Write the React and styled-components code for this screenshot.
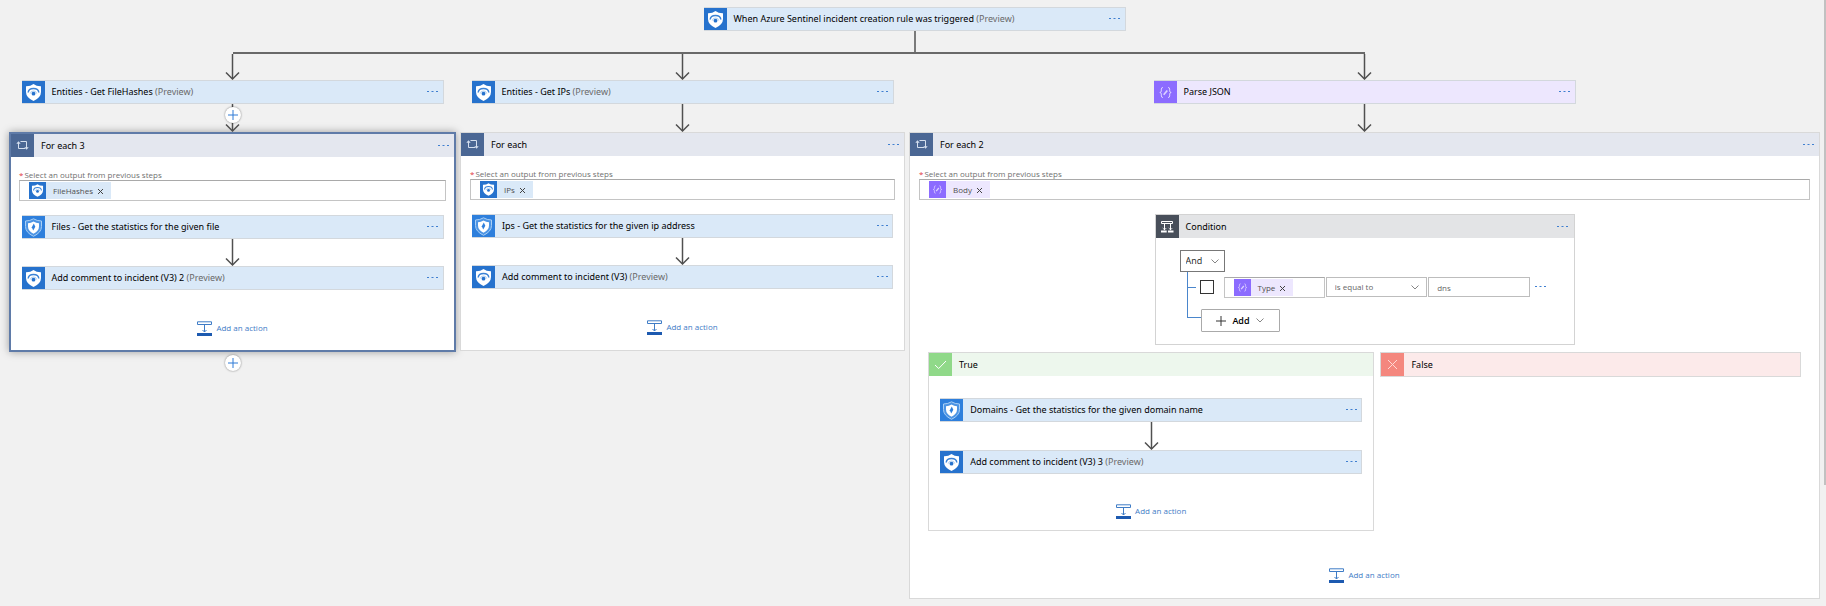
import React from "react";
import styled, { createGlobalStyle, css } from "styled-components";

const GlobalStyle = createGlobalStyle`
  * { box-sizing: border-box; }
  body {
    margin: 0;
    background: #f1f1f1;
    color: #000;
    font-family: "Open Sans", "Noto Sans", sans-serif;
    font-size: 9px;
    line-height: 12px;
  }
  button, input, select { font: inherit; color: inherit; }
  button { padding: 0; border: 0; background: none; cursor: pointer; }
`;

const tones = {
  blue: { icon: "#2672cd", fill: "#dae9f8" },
  sky: { icon: "#2e7fdc", fill: "#dae9f8" },
  purple: { icon: "#8c6cff", fill: "#ede7fe" },
  loop: { icon: "#4b6794", fill: "#e4e7ef" },
  slate: { icon: "#484f5a", fill: "#e3e4e6" },
  green: { icon: "#90d989", fill: "#edf7ed" },
  red: { icon: "#f4877e", fill: "#fceaea" },
};

const Page = styled.div`
  display: flex;
  align-items: flex-start;
  min-height: 100vh;
`;

const Designer = styled.main`
  flex: 1;
  min-width: 0;
  padding: 7px 2px 7px 7px;
`;

const ScrollThumb = styled.div`
  width: 2px;
  height: 80vh;
  background: #c1c1c1;
`;

const Columns = styled.div`
  display: grid;
  grid-template-columns: 451fr 449fr 915fr;
  align-items: start;
`;

const Column = styled.section`
  display: flex;
  flex-direction: column;
  align-items: center;
  min-width: 0;
`;

const TriggerRow = styled.div`
  display: flex;
  flex-direction: column;
  align-items: center;
`;

const Stem = styled.div`
  width: 2px;
  height: 21px;
  background: #7a7a7a;
`;

const BranchLine = styled.div`
  align-self: stretch;
  height: 2px;
  background: #696969;
  margin-left: ${(p) => (p.$first ? "50%" : "0")};
  margin-right: ${(p) => (p.$last ? "50%" : "0")};
`;

const CardBox = styled.article`
  display: flex;
  align-items: center;
  width: 100%;
  max-width: 422px;
  height: 24px;
  padding: 1px 0;
  box-shadow: inset 0 0 0 1px #d3d8dd;
  background: ${(p) => tones[p.$tone].fill};
`;

const HeaderBar = styled.header`
  display: flex;
  align-items: center;
  height: 23px;
  background: ${(p) => tones[p.$tone].fill};
`;

const IconTile = styled.span`
  display: flex;
  flex: none;
  align-items: center;
  justify-content: center;
  width: 23px;
  height: 100%;
  background: ${(p) => tones[p.$tone].icon};
`;

const Title = styled.span`
  flex: 1;
  min-width: 0;
  padding-left: 7px;
  font-family: "Noto Sans", sans-serif;
  white-space: nowrap;
`;

const Muted = styled.span`
  color: #6a6a6a;
`;

const MenuButton = styled.button`
  display: flex;
  flex: none;
  align-items: center;
  justify-content: center;
  width: 22px;
  height: 20px;
`;

const ContainerBody = styled.div`
  padding: 13px 9px 15px;
`;

const Container = styled.section`
  width: calc(100% - 4px);
  background: #fff;
  border: 1px solid #d9d9d9;
  ${(p) =>
    p.$selected &&
    css`
      border: 2px solid #5f7ba8;
      box-shadow: 0 0 8px rgba(0, 0, 0, 0.35);
      ${ContainerBody} { padding: 13px 8px 14px; }
    `}
`;

const Steps = styled.div`
  display: flex;
  flex-direction: column;
  align-items: center;
  padding: ${(p) => (p.$wide ? "14px 9px 0" : "14px 2px 0")};
`;

const FieldLabel = styled.label`
  display: block;
  color: #707070;
  font-size: 8px;
  line-height: 10px;
`;

const Required = styled.span`
  color: #e0343c;
  margin-right: 1px;
`;

const TokenField = styled.div`
  display: flex;
  align-items: center;
  width: 100%;
  height: 21px;
  padding-left: 9px;
  border: 1px solid #c4c4c4;
  border-top-color: #a9a9a9;
  background: #fff;
`;

const TokenInput = styled.input`
  flex: 1;
  min-width: 0;
  height: 100%;
  padding: 0;
  border: 0;
  outline: 0;
  background: none;
`;

const TokenBox = styled.span`
  display: flex;
  flex: none;
  align-items: center;
  height: 17px;
  padding-right: 8px;
  color: #505050;
  font-size: 8px;
  background: ${(p) => tones[p.$tone].fill};
`;

const TokenTile = styled(IconTile)`
  width: 17px;
  margin-right: 7px;
`;

const RemoveButton = styled.button`
  display: flex;
  margin-left: 5px;
  padding-top: 2px;
`;

const AddLink = styled.button`
  display: flex;
  align-items: center;
  gap: 4px;
  height: 16px;
  margin: ${(p) => p.$space || 30}px auto 0;
  color: #3f7cc6;
  font-size: 8px;
`;

const PlusButton = styled.button`
  display: flex;
  align-items: center;
  justify-content: center;
  width: 16px;
  height: 16px;
  border-radius: 50%;
  background: #fff;
  box-shadow: 0 0 2px rgba(0, 0, 0, 0.5);
`;

const ArrowSlot = styled.div`
  position: relative;
  display: flex;
  justify-content: center;
`;

const InsertButton = styled(PlusButton)`
  position: absolute;
  top: 3px;
`;

const TrailingPlus = styled(PlusButton)`
  margin-top: 3px;
`;

const ConditionBox = styled.section`
  width: 100%;
  max-width: 420px;
  padding-bottom: 12px;
  border: 1px solid #d3d3d3;
  background: #fff;
`;

const ConditionBody = styled.div`
  padding: 12px 24px 0;
`;

const SelectShell = styled.span`
  position: relative;
  display: flex;
  align-items: center;
  width: ${(p) => (p.$fill ? "auto" : "45px")};
`;

const SelectBox = styled.select`
  appearance: none;
  width: 100%;
  height: ${(p) => (p.$small ? 20 : 22)}px;
  padding: ${(p) => (p.$small ? "0 8px" : "0 5px")};
  border: 1px solid ${(p) => (p.$small ? "#bdbdbd" : "#777")};
  border-radius: 0;
  background: #fff;
  color: ${(p) => (p.$small ? "#666" : "#222")};
  font-size: ${(p) => (p.$small ? 8 : 9)}px;
`;

const SelectChevron = styled.span`
  position: absolute;
  right: ${(p) => (p.$small ? 8 : 6)}px;
  display: flex;
  pointer-events: none;
`;

const RuleTree = styled.div`
  margin-left: 7px;
  border-left: 1px solid #4a86cc;
  height: 46px;
  margin-bottom: 14px;
`;

const RuleRow = styled.div`
  display: flex;
  align-items: flex-start;
  padding-top: 5px;
`;

const Twig = styled.span`
  flex: none;
  width: ${(p) => p.$width}px;
  height: 1px;
  margin-top: ${(p) => p.$top || 0}px;
  background: #4a86cc;
`;

const Check = styled.input`
  appearance: none;
  flex: none;
  width: 14px;
  height: 14px;
  margin: 3px 10px 0 4px;
  border: 1px solid #333;
  background: #fff;
`;

const Operands = styled.div`
  display: grid;
  grid-template-columns: repeat(3, minmax(0, 1fr));
  flex: none;
  align-items: start;
  gap: 1px;
  width: 306px;
`;

const ValueInput = styled.input`
  min-width: 0;
  height: 20px;
  padding: 0 8px;
  border: 1px solid #bdbdbd;
  color: #666;
  font-size: 8px;
`;

const AddRow = styled.div`
  display: flex;
  align-items: flex-start;
  padding-top: 11px;
`;

const AddButton = styled.button`
  display: flex;
  align-items: center;
  justify-content: center;
  gap: 6px;
  width: 79px;
  height: 23px;
  border: 1px solid #aaa;
  border-radius: 1px;
  background: #fff;
  font-weight: 600;
`;

const Branches = styled.div`
  display: flex;
  align-items: flex-start;
  gap: 6px;
  margin: 7px 9px 0;
`;

const TrueBranch = styled.section`
  flex: 447;
  min-width: 0;
  border: 1px solid #d9d9d9;
`;

const FalseBranch = styled.section`
  flex: 421;
  min-width: 0;
  border: 1px solid #d9d9d9;
`;

const TrueBody = styled.div`
  display: flex;
  flex-direction: column;
  align-items: center;
  padding: 22px 11px 11px;
`;

function SentinelIcon({ size = 23 }) {
  return (
    <svg width={size} height={size} viewBox="0 0 23 23" aria-hidden="true">
      <path d="M11.5 3 Q14.5 5.3 19 5.2 V11 Q19 16.5 11.5 20 Q4 16.5 4 11 V5.2 Q8.500 5.300 11.500 3Z" fill="#fff" />
      <path d="M6.200 11.500 Q6.500 7.500 11.500 7.500 Q16.500 7.500 16.800 11.500" fill="none" stroke="#3a82d6" strokeWidth="1.500" />
      <path d="M8.300 12.500 Q8.800 10 11.500 10 Q14.200 10 14.700 12.500" fill="none" stroke="#a9cbf0" strokeWidth="1" />
      <circle cx="11.500" cy="12.700" r="1.900" fill="#2672cd" />
    </svg>
  );
}

function DefenderIcon() {
  return (
    <svg width="23" height="23" viewBox="0 0 23 23" aria-hidden="true">
      <path d="M11.500 2.800 Q15 5 19.500 5 V10.500 Q19.500 16.500 11.500 20.300 Q3.500 16.500 3.500 10.500 V5 Q8 5 11.500 2.800Z" fill="#4c94e4" stroke="#a9cff5" />
      <path d="M11.500 5.500 Q14 7 17 7.200 V10.500 Q17 15 11.500 17.800 Q6 15 6 10.500 V7.200 Q9 7 11.500 5.500Z" fill="#fff" />
      <path d="M11.800 7.500 L9.800 11.200 L11.200 14.500 L13.300 10.800Z" fill="#2e7fdc" />
    </svg>
  );
}

function JsonIcon({ size = 23 }) {
  return (
    <svg width={size} height={size} viewBox="0 0 23 23" fill="none" stroke="#ddd2ff" aria-hidden="true">
      <path d="M9 6.500 Q7.300 6.500 7.300 8 V10 Q7.300 11.500 5.800 11.500 Q7.300 11.500 7.300 13 V15 Q7.300 16.500 9 16.500" />
      <path d="M14 6.500 Q15.700 6.500 15.700 8 V10 Q15.700 11.500 17.200 11.500 Q15.700 11.500 15.700 13 V15 Q15.700 16.500 14 16.500" />
      <path d="M9.700 13.700 L13.300 9.500" strokeWidth="1.700" />
    </svg>
  );
}

function LoopIcon() {
  return (
    <svg width="23" height="23" viewBox="0 0 23 23" fill="none" stroke="#d5dfee" aria-hidden="true">
      <path d="M7.500 9 V14.500 H14" />
      <path d="M9.500 7.500 H15.500 V14" />
      <path d="M5.300 9.800 L7.500 7.300 L9.700 9.800Z M13.300 13.200 L15.500 15.700 L17.700 13.200Z" fill="#d5dfee" stroke="none" />
    </svg>
  );
}

function ConditionIcon() {
  return (
    <svg width="23" height="23" viewBox="0 0 23 23" fill="none" stroke="#fff" aria-hidden="true">
      <path d="M5.500 6.500 H16.500 V8.500 H5.500Z M8.500 8.500 V15 M14.500 8.500 V15" />
      <path d="M6.700 13 L8.500 14.800 L10.300 13 M12.700 13 L14.500 14.800 L16.300 13" strokeWidth=".8" />
      <path d="M5 16.500 H10.700 M12 16.500 H17.500" strokeWidth="2" />
    </svg>
  );
}

function TickIcon() {
  return (
    <svg width="23" height="23" viewBox="0 0 23 23" fill="none" stroke="#fff" aria-hidden="true">
      <path d="M6 12 L9.700 15.500 L17 8" />
    </svg>
  );
}

function CrossIcon() {
  return (
    <svg width="23" height="23" viewBox="0 0 23 23" fill="none" stroke="#ffd9d5" aria-hidden="true">
      <path d="M7 7 L16 16 M16 7 L7 16" />
    </svg>
  );
}

function Arrow({ height = 28 }) {
  return (
    <svg width="15" height={height} viewBox={`0 0 15 ${height}`} fill="none" stroke="#505050" aria-hidden="true">
      <path d={`M7.500 0 V${height - 1}`} strokeWidth="1.500" />
      <path d={`M1 ${height - 7.5} L7.500 ${height - 1} L14 ${height - 7.5}`} strokeWidth="1.500" />
    </svg>
  );
}

function Plus({ size = 10, color = "#2f7bd6" }) {
  return (
    <svg width={size} height={size} viewBox="0 0 10 10" stroke={color} aria-hidden="true">
      <path d="M5 0 V10 M0 5 H10" />
    </svg>
  );
}

function Chevron() {
  return (
    <svg width="8" height="5" viewBox="0 0 8 5" fill="none" stroke="#777" strokeWidth=".9" aria-hidden="true">
      <path d="M.5 .5 L4 4 L7.500 .5" />
    </svg>
  );
}

function Menu() {
  return (
    <MenuButton type="button" aria-label="More commands">
      <svg width="11" height="2" viewBox="0 0 11 2" fill="#3f7fd0" aria-hidden="true">
        <path d="M0 0 H2 V1 H0Z M4.500 0 H6.500 V1 H4.500Z M9 0 H11 V1 H9Z" />
      </svg>
    </MenuButton>
  );
}

const glyphs = {
  sentinel: ["blue", SentinelIcon],
  defender: ["sky", DefenderIcon],
  json: ["purple", JsonIcon],
};

function Card({ kind = "sentinel", title, preview }) {
  const [tone, Glyph] = glyphs[kind];
  return (
    <CardBox $tone={tone}>
      <IconTile $tone={tone}><Glyph /></IconTile>
      <Title>{title}{preview && <Muted> (Preview)</Muted>}</Title>
      <Menu />
    </CardBox>
  );
}

function Header({ tone, icon, title, menu }) {
  return (
    <HeaderBar $tone={tone}>
      <IconTile $tone={tone}>{icon}</IconTile>
      <Title>{title}</Title>
      {menu && <Menu />}
    </HeaderBar>
  );
}

function Token({ kind = "sentinel", children }) {
  const [tone, Glyph] = glyphs[kind];
  return (
    <TokenBox $tone={tone}>
      <TokenTile $tone={tone}><Glyph size={17} /></TokenTile>
      {children}
      <RemoveButton type="button" aria-label={`Remove ${children}`}>
        <svg width="5" height="5" viewBox="0 0 5 5" stroke="#444" aria-hidden="true">
          <path d="M0 0 L5 5 M5 0 L0 5" />
        </svg>
      </RemoveButton>
    </TokenBox>
  );
}

function OutputField({ id, kind, token }) {
  return (
    <>
      <FieldLabel htmlFor={id}><Required>*</Required>Select an output from previous steps</FieldLabel>
      <TokenField>
        <Token kind={kind}>{token}</Token>
        <TokenInput id={id} />
      </TokenField>
    </>
  );
}

function AddAction({ space }) {
  return (
    <AddLink type="button" $space={space}>
      <svg width="15" height="15" viewBox="0 0 15 15" fill="none" stroke="#3f7cc6" aria-hidden="true">
        <path d="M.5 .8 H14.500 V3.500 H.5Z M7.500 3.500 V11 M5.500 9 L7.500 11 L9.500 9" />
        <path d="M0 13.500 H15" stroke="#1d5ab0" strokeWidth="3" />
      </svg>
      Add an action
    </AddLink>
  );
}

function Condition() {
  return (
    <ConditionBox>
      <Header tone="slate" icon={<ConditionIcon />} title="Condition" menu />
      <ConditionBody>
        <SelectShell>
          <SelectBox aria-label="Group operator" defaultValue="And">
            <option>And</option>
            <option>Or</option>
          </SelectBox>
          <SelectChevron><Chevron /></SelectChevron>
        </SelectShell>
        <RuleTree>
          <RuleRow>
            <Twig $width={8} $top={10} />
            <Check type="checkbox" aria-label="Select rule" />
            <Operands>
              <TokenField>
                <Token kind="json">Type</Token>
                <TokenInput aria-label="Value to compare" />
              </TokenField>
              <SelectShell $fill>
                <SelectBox $small aria-label="Comparison" defaultValue="is equal to">
                  <option>is equal to</option>
                  <option>is not equal to</option>
                </SelectBox>
                <SelectChevron $small><Chevron /></SelectChevron>
              </SelectShell>
              <ValueInput aria-label="Compared value" defaultValue="dns" />
            </Operands>
            <Menu />
          </RuleRow>
          <AddRow>
            <Twig $width={13} $top={8} />
            <AddButton type="button">
              <Plus color="#333" />
              Add
              <Chevron />
            </AddButton>
          </AddRow>
        </RuleTree>
      </ConditionBody>
    </ConditionBox>
  );
}

export default function App() {
  return (
    <Page>
      <GlobalStyle />
      <Designer>
        <TriggerRow>
          <Card title="When Azure Sentinel incident creation rule was triggered" preview />
          <Stem />
        </TriggerRow>
        <Columns>
          <Column>
            <BranchLine $first />
            <Arrow height={26} />
            <Card title="Entities - Get FileHashes" preview />
            <ArrowSlot>
              <Arrow />
              <InsertButton type="button" aria-label="Insert a step"><Plus /></InsertButton>
            </ArrowSlot>
            <Container $selected>
              <Header tone="loop" icon={<LoopIcon />} title="For each 3" menu />
              <ContainerBody>
                <OutputField id="output-files" token="FileHashes" />
                <Steps>
                  <Card kind="defender" title="Files - Get the statistics for the given file" />
                  <Arrow height={27} />
                  <Card title="Add comment to incident (V3) 2" preview />
                </Steps>
                <AddAction />
              </ContainerBody>
            </Container>
            <TrailingPlus type="button" aria-label="Add a step"><Plus /></TrailingPlus>
          </Column>
          <Column>
            <BranchLine />
            <Arrow height={26} />
            <Card title="Entities - Get IPs" preview />
            <Arrow />
            <Container>
              <Header tone="loop" icon={<LoopIcon />} title="For each" menu />
              <ContainerBody>
                <OutputField id="output-ips" token="IPs" />
                <Steps>
                  <Card kind="defender" title="Ips - Get the statistics for the given ip address" />
                  <Arrow height={27} />
                  <Card title="Add comment to incident (V3)" preview />
                </Steps>
                <AddAction />
              </ContainerBody>
            </Container>
          </Column>
          <Column>
            <BranchLine $last />
            <Arrow height={26} />
            <Card kind="json" title="Parse JSON" />
            <Arrow />
            <Container>
              <Header tone="loop" icon={<LoopIcon />} title="For each 2" menu />
              <ContainerBody>
                <OutputField id="output-body" kind="json" token="Body" />
                <Steps $wide>
                  <Condition />
                </Steps>
                <Branches>
                  <TrueBranch>
                    <Header tone="green" icon={<TickIcon />} title="True" />
                    <TrueBody>
                      <Card kind="defender" title="Domains - Get the statistics for the given domain name" />
                      <Arrow />
                      <Card title="Add comment to incident (V3) 3" preview />
                      <AddAction space={29} />
                    </TrueBody>
                  </TrueBranch>
                  <FalseBranch>
                    <Header tone="red" icon={<CrossIcon />} title="False" />
                  </FalseBranch>
                </Branches>
                <AddAction space={36} />
              </ContainerBody>
            </Container>
          </Column>
        </Columns>
      </Designer>
      <ScrollThumb />
    </Page>
  );
}
